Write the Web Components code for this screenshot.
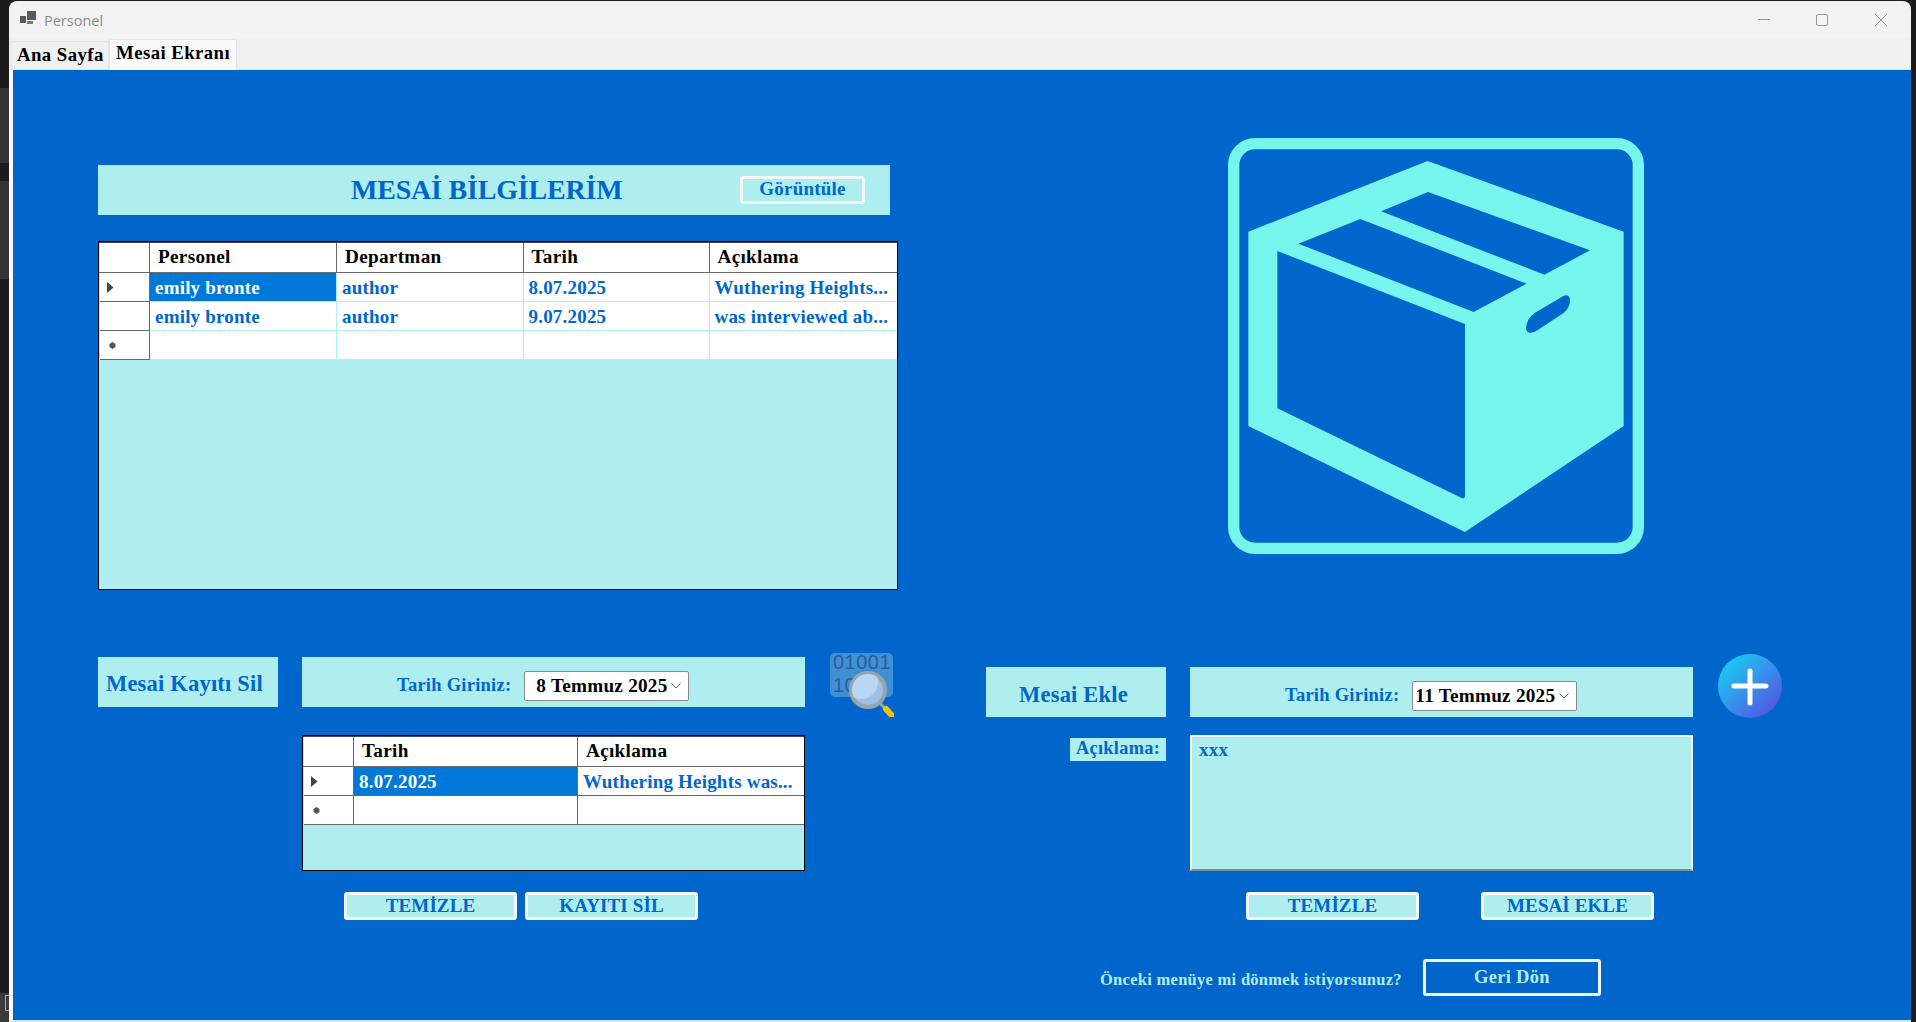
<!DOCTYPE html>
<html lang="tr"><head><meta charset="utf-8"><title>Personel</title>
<style>
html,body{margin:0;padding:0;height:100%;overflow:hidden}
body{font-family:"Liberation Serif","Times New Roman",serif;font-weight:700;background:#1c1c1c linear-gradient(#1c1c1c 88px,#333 88px,#333 163px,#1c1c1c 163px,#1c1c1c 181px,#333 181px,#333 279px,#1c1c1c 279px,#1c1c1c 993px,#3a3a3a 993px) no-repeat 0 0/9px 100%}
</style></head><body>
<desk-mark></desk-mark>
<app-window>
  <win-titlebar slot="title">Personel</win-titlebar>
  <tab-strip slot="tabs"></tab-strip>
  <mesai-screen></mesai-screen>
</app-window>
<script>
const C={blue:'#0066cc',pale:'#afeeee',sel:'#0078d7',line:'#696969',ic:'#75f5eb'};
function def(name,html){customElements.define(name,class extends HTMLElement{
  constructor(){super();const r=this.attachShadow({mode:'open'});r.innerHTML=html;}
});}
def('desk-mark',`<style>:host{position:absolute;left:5px;top:995px;width:4px;height:16px;box-sizing:border-box;border:1px solid #aaa;border-right:0}</style>`);
def('app-window',`<style>
:host{display:flex;flex-direction:column;box-sizing:border-box;width:1902px;height:1021px;margin:1px 0 0 9px;background:#f3f3f3;border-radius:8px 8px 0 0;overflow:hidden}
main{flex:1;display:flex;min-height:0;border-left:4px solid #f9f9f9;border-bottom:2px solid #d9e6f2}
</style><slot name="title"></slot><slot name="tabs"></slot><main><slot></slot></main>`);
def('win-titlebar',`<style>
:host{display:flex;align-items:center;height:37px;flex:none;font:400 14px "Open Sans","Noto Sans",sans-serif;color:#8c8c8c}
svg{display:block;flex:none}.ic{margin:-2px 8px 0 11px}.txt{flex:1;font-size:14.5px;position:relative;top:1px}
.b{width:58px;display:flex;justify-content:center}.end{width:60px}
</style><svg class="ic" width="16" height="15" viewBox="0 0 16 15"><rect x="0" y="5" width="6" height="7" fill="#5a5a5a"/><rect x="7" y="0" width="9" height="9" fill="#5a5a5a"/><rect x="7" y="10" width="6" height="3" fill="#777"/></svg>
<span class="txt"><slot></slot></span>
<span class="b"><svg width="14" height="14" viewBox="0 0 14 14"><path d="M1 6.500h12" stroke="#999"/></svg></span>
<span class="b"><svg width="14" height="14" viewBox="0 0 14 14"><rect x="1.500" y="1.500" width="11" height="11" rx="1.500" fill="none" stroke="#999"/></svg></span>
<span class="b end"><svg width="14" height="14" viewBox="0 0 14 14"><path d="M1 1l12 12M13 1L1 13" stroke="#999"/></svg></span>`);
def('tab-strip',`<style>
:host{display:flex;align-items:flex-end;height:32px;flex:none;box-sizing:border-box;padding-left:2px;background:#f0f0f0;border-bottom:1px solid #e4e4e4;font:700 18.800px "Liberation Serif",serif;color:#000}
span{display:block;box-sizing:border-box;white-space:nowrap}
.a{height:28px;width:98px;border:1px solid #e2e2e2;border-bottom:0;padding:2px 0 0 5px;letter-spacing:.42px}
.b{height:31px;width:128px;background:#fafafa;border:1px solid #e6e6e6;border-bottom:0;margin-bottom:-1px;padding:2px 0 0 6px;letter-spacing:.42px}
</style><span class="a">Ana Sayfa</span><span class="b">Mesai Ekranı</span>`);
def('form-panel',`<style>
:host{display:flex;align-items:center;box-sizing:border-box;background:${C.pale};color:${C.blue};height:50px}
</style><slot></slot>`);
def('form-button',`<style>
:host{display:flex;align-items:center;justify-content:center;box-sizing:border-box;width:173px;height:28px;flex:none;background:${C.pale};color:${C.blue};border:3px solid #f4f8fb;border-radius:3px;font-size:19px;letter-spacing:.1px;white-space:nowrap}
:host([dark]){background:transparent;color:${C.pale};width:178px;height:37px;font-size:18.500px;letter-spacing:.3px}
</style><slot></slot>`);
def('date-picker',`<style>
:host{display:flex;align-items:center;box-sizing:border-box;width:165px;height:30px;flex:none;margin-top:8px;background:#fff;border:1px solid #8a8a8a;border-radius:2px;color:#000;font-size:19.200px;white-space:nowrap;position:relative}
svg{position:absolute;right:7px;top:11px}
span{padding-left:var(--pl,11px);letter-spacing:.25px}
</style><span><slot></slot></span><svg width="10" height="6" viewBox="0 0 10 6"><path d="M.5.5L5 5 9.500.5" fill="none" stroke="#666"/></svg>`);
customElements.define('data-grid',class extends HTMLElement{
  constructor(){super();this.attachShadow({mode:'open'});}
  connectedCallback(){
    const cols=this.getAttribute('cols'),head=JSON.parse(this.getAttribute('head')),rows=JSON.parse(this.getAttribute('rows')),sel=this.getAttribute('lines')||C.pale;
    const tri='<svg width="7" height="11" viewBox="0 0 7 11"><path d="M0 0l6.500 5.500L0 11z" fill="#444"/></svg>';
    const star='<svg width="7" height="7" viewBox="0 0 7 7" style="margin-left:2px"><path d="M3.500 0L6.500 2v3L3.500 7 .5 5V2z" fill="#555"/></svg>';
    let h=`<style>
:host{display:block;box-sizing:border-box;border:1px solid #000;background:${C.pale};font-size:19px;letter-spacing:.2px;overflow:hidden}
.r{display:grid;grid-template-columns:${cols};height:29px}
.r.h{height:31px;border-bottom:1px solid ${C.line};border-top:1px solid #444;box-sizing:border-box}
.c{box-sizing:border-box;background:#fff;color:${C.blue};padding:3.500px 0 0 5px;line-height:21px;border-right:1px solid ${sel};border-bottom:1px solid ${sel};white-space:nowrap;overflow:hidden}
.h .c{color:#000;border:0;border-right:1px solid ${C.line};padding:2.500px 0 0 8px;font-size:19.200px;letter-spacing:.3px;line-height:22px}
.h .c:last-child,.c:last-child{border-right:0}
.c.s{background:${C.sel};color:#fff}
.c.rh{border-right:1px solid ${C.line};border-bottom:1px solid ${C.line};display:flex;align-items:center;padding:0 0 0 7px;margin-left:1px}
.h .c:first-child{margin-left:1px}
</style>`;
    h+=`<div class="r h"><div class="c"></div>${head.map(t=>`<div class="c">${t}</div>`).join('')}</div>`;
    rows.forEach((r,i)=>{const last=i===rows.length-1;
      h+=`<div class="r"><div class="c rh">${last?star:(i===0?tri:'')}</div>${r.map((t,j)=>`<div class="c${i===0&&j===0?' s':''}">${t}</div>`).join('')}</div>`;});
    this.shadowRoot.innerHTML=h;
  }
});
def('box-icon',`<style>:host{display:block;width:416px;height:416px;flex:none}svg{display:block}</style>
<svg width="416" height="416" viewBox="54 54 1248 1248"><rect x="71" y="71" width="1214" height="1214" rx="64" fill="none" stroke="${C.ic}" stroke-width="34"/>
<path fill="${C.ic}" fill-rule="evenodd" d="M115 335L653 123 1241 335V918L765 1236 115 918Z M202 393L765 612V1128Q765 1138 755 1134L202 865Z M265 371L451 297 950 491 791 576Z M513 274L654 216 1140 391 1003 464Z M975 578L1060 528Q1078 520 1080 540 1080 562 1062 578L975 635Q950 645 948 625 950 595 975 578Z"/></svg>`);
def('binary-icon',`<style>:host{display:block;width:64px;height:64px;flex:none;position:relative}svg{display:block}
.t{position:absolute;left:3px;top:-2px;width:61px;font:400 20px/23px "Liberation Sans",sans-serif;color:#2a5f96;letter-spacing:.5px;white-space:nowrap}</style>
<svg width="64" height="64" viewBox="0 0 64 64"><rect x="0" y="0" width="63" height="44" rx="5" fill="#3f8fd6"/></svg>
<div class="t">01001<br>10</div>
<svg style="position:absolute;left:0;top:0" width="64" height="64" viewBox="0 0 64 64"><defs><clipPath id="g"><circle cx="38" cy="37" r="16"/></clipPath></defs>
<path d="M50 50l8 9" stroke="#9aa5ab" stroke-width="3"/><path d="M56 56l6 6.500" stroke="#f4c20d" stroke-width="6" stroke-linecap="round"/>
<circle cx="38" cy="37" r="17" fill="#9ebfe6" stroke="#9aa5ab" stroke-width="4"/><circle cx="31" cy="29" r="17" fill="#b9d6f2" clip-path="url(#g)"/></svg>`);
def('plus-icon',`<style>:host{display:block;width:64px;height:64px;flex:none}svg{display:block}</style>
<svg width="64" height="64" viewBox="0 0 64 64"><defs><linearGradient id="p" x1="0" y1="0" x2="1" y2="1"><stop offset="0" stop-color="#13dcf5"/><stop offset="1" stop-color="#5a46e0"/></linearGradient></defs><circle cx="32" cy="32" r="32" fill="url(#p)"/><path d="M32 17v32M16 32h32" stroke="#fff" stroke-width="5" stroke-linecap="round"/></svg>`);
def('sil-section',`<style>
:host{display:flex;margin-top:68px}
.l{width:180px;flex:none}.m{width:503px;flex:none;margin-left:24px}
.lbl{font-size:22.500px;letter-spacing:.2px;padding:3px 0 0 8px;white-space:nowrap}
.t{font-size:18.500px;letter-spacing:.25px;margin:7px 13px 0 95px;white-space:nowrap}
data-grid{margin-top:28px;height:136px}
.btns{display:flex;gap:8px;margin:21px 0 0 42px}
binary-icon{margin:-4px 0 0 25px}
</style>
<div class="l"><form-panel><span class="lbl">Mesai Kayıtı Sil</span></form-panel></div>
<div class="m"><form-panel><span class="t">Tarih Giriniz:</span><date-picker>8 Temmuz 2025</date-picker></form-panel>
<data-grid cols="51px 224px 1fr" lines="${C.line}" head='["Tarih","Açıklama"]' rows='[["8.07.2025","Wuthering Heights was..."],["",""]]'></data-grid>
<div class="btns"><form-button>TEMİZLE</form-button><form-button>KAYITI SİL</form-button></div></div>
<binary-icon></binary-icon>`);
def('ekle-section',`<style>
:host{display:block;margin-top:113px}
.row{display:flex}
.l{width:180px;flex:none;display:flex;flex-direction:column;align-items:flex-end}
.m{width:503px;flex:none;margin-left:24px}
.lbl{box-sizing:border-box;font-size:22.500px;letter-spacing:.2px;width:100%;text-align:center;padding:5px 5px 0 0;white-space:nowrap}
.t{font-size:18.500px;letter-spacing:.25px;margin:7px 13px 0 95px;white-space:nowrap}
.ac{margin-top:21px;background:${C.pale};color:${C.blue};height:23px;width:96px;box-sizing:border-box;text-align:center;font-size:18.300px;letter-spacing:.32px;line-height:21px}
.area{box-sizing:border-box;height:136px;margin-top:18px;background:${C.pale};color:${C.blue};border:2px solid #eef5fa;border-bottom-color:#7d8e99;font-size:19px;letter-spacing:.2px;padding:2px 7px}
.btns{display:flex;gap:62px;margin:21px 0 0 56px}
plus-icon{margin:-13px 0 0 25px}
.back{display:flex;align-items:center;margin:39px 0 0 114px}
.q{width:300px;margin-right:23px;color:${C.pale};font-size:16.500px;letter-spacing:.28px;white-space:nowrap;padding-top:4px}
</style>
<div class="row"><div class="l"><form-panel style="width:100%"><span class="lbl">Mesai Ekle</span></form-panel><div class="ac">Açıklama:</div></div>
<div class="m"><form-panel><span class="t">Tarih Giriniz:</span><date-picker style="--pl:2px">11 Temmuz 2025</date-picker></form-panel>
<div class="area">xxx</div>
<div class="btns"><form-button>TEMİZLE</form-button><form-button>MESAİ EKLE</form-button></div></div>
<plus-icon></plus-icon></div>
<div class="back"><span class="q">Önceki menüye mi dönmek istiyorsunuz?</span><form-button dark>Geri Dön</form-button></div>`);
def('mesai-screen',`<style>
:host{display:flex;flex:1;background:${C.blue};box-sizing:border-box;padding-left:85px;min-width:0}
.left{width:800px;flex:none;padding-top:95px}
.right{width:800px;flex:none;margin-left:88px;padding-top:68px}
.head{width:792px}
.title{font-size:28px;letter-spacing:-.2px;margin-left:253px;white-space:nowrap;padding-bottom:1px}
.head form-button{width:125px;margin-left:auto;margin-right:25px;padding-bottom:2px;letter-spacing:.2px}
data-grid.main{margin-top:26px;height:349px}
sil-section{margin-top:67px}
box-icon{margin-left:242px}
</style>
<div class="left"><form-panel class="head"><span class="title">MESAİ BİLGİLERİM</span><form-button>Görüntüle</form-button></form-panel>
<data-grid class="main" cols="51px 187px 186.500px 186px 1fr" head='["Personel","Departman","Tarih","Açıklama"]' rows='[["emily bronte","author","8.07.2025","Wuthering Heights..."],["emily bronte","author","9.07.2025","was interviewed ab..."],["","","",""]]'></data-grid>
<sil-section></sil-section></div>
<div class="right"><box-icon></box-icon><ekle-section></ekle-section></div>`);
</script></body></html>
